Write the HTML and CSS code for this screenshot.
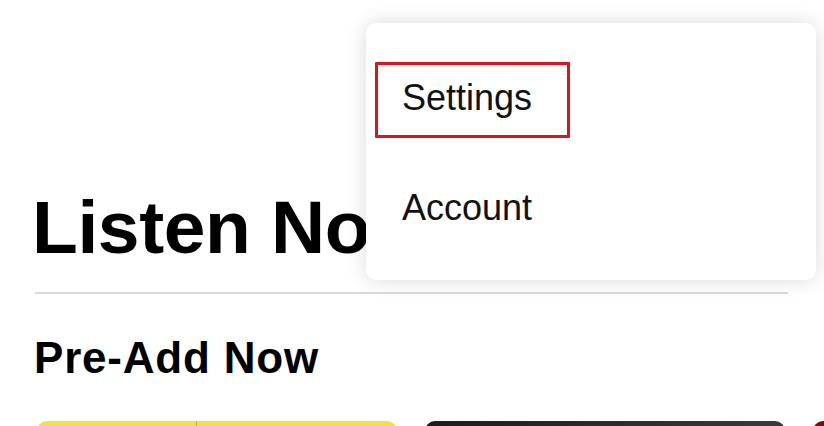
FILE: index.html
```html
<!DOCTYPE html>
<html>
<head>
	<title>Listen Now</title>
	<link rel="stylesheet" href="styles.css">
</head>
<body>

	<div class="page">
		<h1 class="title">Listen Now</h1>
		<hr class="rule">

		<h2 class="section">Pre-Add Now</h2>
		<div class="shelf">
			<div class="card yellow"><span class="seam"></span></div>
			<div class="card dark"></div>
			<div class="card red"></div>
		</div>

		<ul class="menu">
			<li class="menuItem active">Settings</li>
			<li class="menuItem">Account</li>
		</ul>
	</div>

</body>
</html>
```

FILE: styles.css
```css
body{
	margin: 0;
	background: #fff;
	font-family: "Liberation Sans", Arial, sans-serif;
	color: #000;
	overflow: hidden;
}

.page{
	position: relative;
	height: 426px;
	padding-left: 35px;
	padding-top: 187px;
	box-sizing: border-box;
	overflow: hidden;
}

.title{
	margin: 0 0 25px -3px;
	font-size: 75px;
	line-height: 80px;
	font-weight: bold;
	letter-spacing: -0.4px;
	white-space: nowrap;
}

.rule{
	margin: 0;
	width: 753px;
	height: 2px;
	border: none;
	background: #dadada;
}

.section{
	margin: 40px 0 39px -1px;
	font-size: 44px;
	line-height: 48px;
	font-weight: bold;
	letter-spacing: 0.8px;
}

.shelf{
	display: grid;
	grid-template-columns: 360px 360px 360px;
	gap: 28px;
	margin-left: 2px;
}

.card{
	height: 200px;
	border-radius: 10px;
}

.yellow{
	position: relative;
	background: linear-gradient(180deg, #f1e33a, #e2cf10);
}

.seam{
	position: absolute;
	left: 159px;
	top: 0;
	width: 1px;
	height: 100%;
	background: #c9b60c;
}

.dark{
	background: linear-gradient(90deg, #1c1c1c, #3a3a3a);
}

.red{
	background: linear-gradient(90deg, #7a0c0c, #a01818);
}

.menu{
	position: absolute;
	left: 366px;
	top: 23px;
	width: 450px;
	margin: 0;
	padding: 39px 0 32px 9px;
	box-sizing: border-box;
	list-style: none;
	background: #fff;
	border-radius: 10px;
	box-shadow: 0 0 20px rgba(0,0,0,0.15);
}

.menuItem{
	width: 195px;
	box-sizing: border-box;
	padding: 15px 0 19px 24px;
	border: 3px solid transparent;
	font-size: 36px;
	line-height: 36px;
	color: #111;
}

.menuItem + .menuItem{
	margin-top: 34px;
}

.active{
	border-color: #d9161e;
	border-radius: 1px;
}
```
